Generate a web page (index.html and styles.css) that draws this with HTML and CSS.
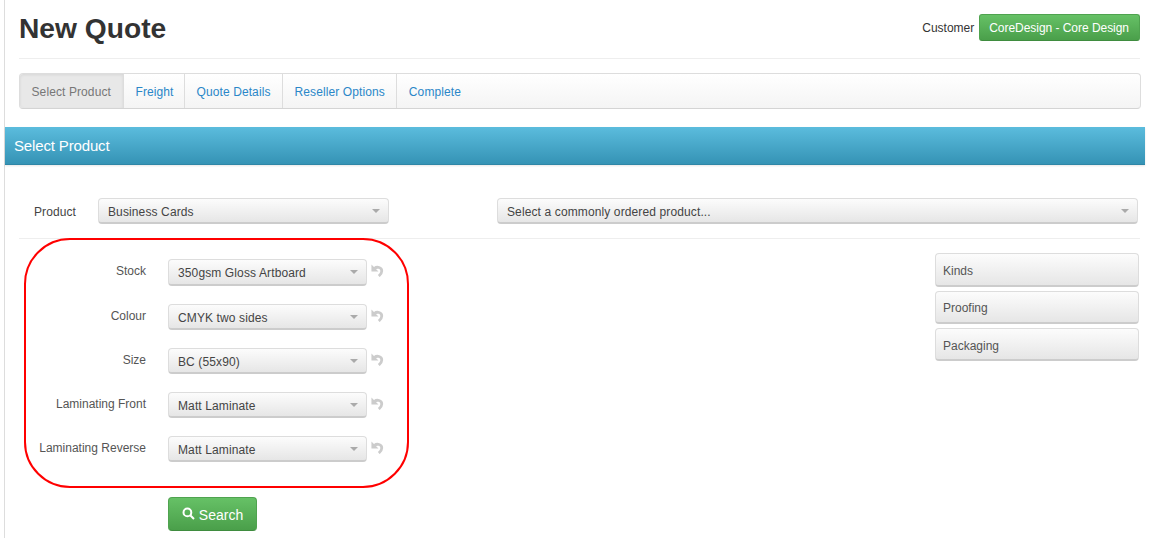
FILE: index.html
```html
<!DOCTYPE html>
<html lang="en">
<head>
<meta charset="utf-8">
<title>New Quote</title>
<link rel="stylesheet" href="styles.css">
</head>
<body>
<svg class="sprite" width="0" height="0" aria-hidden="true">
  <symbol id="undo" viewBox="0 0 14 14"><path class="undo-head" d="M.5.500v7.500h7.500z"/><path class="undo-arc" d="M3.800 4.600c2.600-2 7.800-1.200 7.800 2.900 0 2.200-1.300 3.900-3.200 5.500"/></symbol>
</svg>
<div class="page">
  <header class="head">
    <h1 class="title">New Quote</h1>
    <div class="customer"><span>Customer</span><a class="badge-btn">CoreDesign - Core Design</a></div>
  </header>
  <nav class="tabs">
    <a class="tab active">Select Product</a>
    <a class="tab narrow">Freight</a>
    <a class="tab">Quote Details</a>
    <a class="tab">Reseller Options</a>
    <a class="tab">Complete</a>
  </nav>
  <h2 class="banner">Select Product</h2>
  <section class="product-row">
    <label class="product-label">Product</label>
    <div class="select product-select"><span>Business Cards</span><i class="caret"></i></div>
    <div class="select common-select"><span>Select a commonly ordered product...</span><i class="caret"></i></div>
  </section>
  <section class="body">
    <div class="form">
      <div class="highlight"></div>
      <div class="row tall"><label>Stock</label><div class="select opt"><span>350gsm Gloss Artboard</span><i class="caret"></i></div><svg class="undo"><use href="#undo"/></svg></div>
      <div class="row"><label>Colour</label><div class="select opt"><span>CMYK two sides</span><i class="caret"></i></div><svg class="undo"><use href="#undo"/></svg></div>
      <div class="row"><label>Size</label><div class="select opt"><span>BC (55x90)</span><i class="caret"></i></div><svg class="undo"><use href="#undo"/></svg></div>
      <div class="row"><label>Laminating Front</label><div class="select opt"><span>Matt Laminate</span><i class="caret"></i></div><svg class="undo"><use href="#undo"/></svg></div>
      <div class="row"><label>Laminating Reverse</label><div class="select opt"><span>Matt Laminate</span><i class="caret"></i></div><svg class="undo"><use href="#undo"/></svg></div>
      <button class="search" type="button">
        <svg class="search-icon" viewBox="0 0 13 13"><circle cx="5.400" cy="5.400" r="3.900"/><path d="M8.200 8.200 12 12"/></svg>Search
      </button>
    </div>
    <aside class="side">
      <a class="side-item low">Kinds</a>
      <a class="side-item">Proofing</a>
      <a class="side-item low">Packaging</a>
    </aside>
  </section>
</div>
</body>
</html>
```
FILE: styles.css
```css
* { box-sizing: border-box; }
html, body { margin: 0; height: 100%; background: #fff; overflow: hidden; }
body { font-family: "Liberation Sans", Arial, sans-serif; font-size: 12px; color: #444; padding-left: 4px; }
.sprite { position: absolute; }
.page { width: 1141px; height: 538px; border-left: 1px solid #ddd; }
.head { height: 59px; margin: 0 5px 0 14px; border-bottom: 1px solid #eee; display: flex; justify-content: space-between; align-items: flex-start; }
.title { margin: 11px 0 0; font-size: 28.200px; line-height: 34px; font-weight: 700; color: #333; }
.customer { display: flex; align-items: center; gap: 5px; margin-top: 14px; color: #333; }
.badge-btn { height: 27px; padding: 0 10px 0 9px; line-height: 27px; letter-spacing: -.04px; color: #fff; background: linear-gradient(#66c166, #4a9f4a); border: 1px solid #4fa34f; border-bottom-color: #3f8c3f; border-radius: 3px; }
.tabs { height: 36px; margin: 14px 4px 0 14px; display: flex; border: 1px solid #ddd; border-bottom-color: #d4d4d4; border-radius: 4px; background: linear-gradient(#fff, #f4f4f4); }
.tab { padding: 1px 11.500px 0; line-height: 34px; color: #2a87c8; border-right: 1px solid #ddd; letter-spacing: .1px; }
.tab:last-child { border-right: 0; }
.tab.active { padding-right: 12px; color: #777; background: #e8e8e8; border-radius: 3px 0 0 3px; box-shadow: inset 0 1px 3px rgba(0,0,0,.08); }
.tab.narrow { padding-right: 10.500px; }
.banner { height: 38px; margin: 18px 0 0; padding-left: 9px; font-size: 15px; line-height: 38px; font-weight: 400; letter-spacing: -.15px; color: #fff; background: linear-gradient(#5bbcdd, #3593b5); border-bottom: 1px solid #2f86a6; box-shadow: 0 1px 2px rgba(0,0,0,.1); }
.product-row { height: 41px; margin: 33px 5px 0 14px; border-bottom: 1px solid #eee; display: flex; align-items: flex-start; }
.product-label { width: 79px; padding-left: 15px; line-height: 28px; color: #444; letter-spacing: .1px; }
.select { height: 26px; display: flex; align-items: center; justify-content: space-between; padding: 3px 8px 0 9px; color: #444; background: linear-gradient(#fcfcfc, #e6e6e6); border: 1px solid #ddd; border-bottom: 2px solid #ccc; border-radius: 4px; letter-spacing: .12px; }
.product-select { width: 291px; }
.common-select { width: 641px; margin-left: 108px; }
.caret { width: 0; height: 0; margin-top: -3px; border-left: 4px solid transparent; border-right: 4px solid transparent; border-top: 4px solid #aaa; }
.body { display: flex; justify-content: space-between; margin: 0 6px 0 14px; }
.form { position: relative; padding-top: 20px; display: flex; flex-direction: column; gap: 18px; }
.highlight { position: absolute; left: 5px; top: -1px; width: 385px; height: 250px; border: 2px solid #f00; border-radius: 46px; pointer-events: none; }
.row { display: flex; align-items: flex-start; height: 26px; }
.row.tall { height: 27px; }
.row.tall .select { height: 27px; padding-top: 1px; }
.row.tall .caret { margin-top: -1px; }
.row label { width: 127px; text-align: right; line-height: 24px; color: #555; }
.row.tall label { line-height: 25px; }
.opt { width: 199px; margin-left: 22px; }
.undo { width: 13px; height: 13px; margin: 5px 0 0 4px; fill: #ccc; }
.undo-head { stroke: none; }
.undo-arc { fill: none; stroke: #ccc; stroke-width: 3; }
.search { width: 89px; height: 34px; margin: 17px 0 0 149px; padding: 1px 0 0; display: flex; align-items: center; justify-content: center; gap: 4px; font: 14px "Liberation Sans", Arial, sans-serif; color: #fff; background: linear-gradient(#66c166, #4a9f4a); border: 1px solid #4fa34f; border-bottom-color: #3f8c3f; border-radius: 4px; }
.search-icon { width: 13px; height: 13px; margin-top: -2px; fill: none; stroke: #fff; stroke-width: 2; }
.side { width: 204px; padding-top: 14px; display: flex; flex-direction: column; gap: 4px; }
.side-item { height: 33px; padding-left: 7px; line-height: 33px; color: #555; background: linear-gradient(#fcfcfc, #e6e6e6); border: 1px solid #ddd; border-bottom: 2px solid #ccc; border-radius: 4px; }
.side-item.low { line-height: 35px; }
.side-item:first-child { height: 34px; }
```
